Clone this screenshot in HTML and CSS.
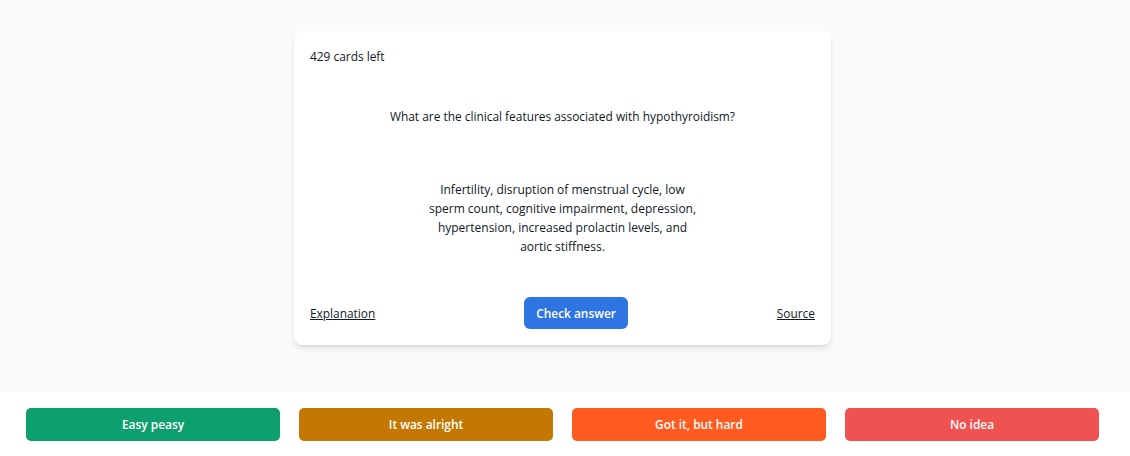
FILE: index.html
```html
<!DOCTYPE html>
<html>
<head>
<meta charset="utf-8">
<link rel="stylesheet" href="styles.css">
</head>
<body>
<main class="stage">
  <section class="card">
    <div class="count">429 cards left</div>
    <div class="question">What are the clinical features associated with hypothyroidism?</div>
    <div class="answer">Infertility, disruption of menstrual cycle, low sperm count, cognitive impairment, depression, hypertension, increased prolactin levels, and aortic stiffness.</div>
    <div class="card-footer">
      <a class="link" href="#">Explanation</a>
      <button class="check">Check answer</button>
      <a class="link" href="#">Source</a>
    </div>
  </section>
</main>
<footer class="grades">
  <button class="grade easy">Easy peasy</button>
  <button class="grade ok">It was alright</button>
  <button class="grade hard">Got it, but hard</button>
  <button class="grade none">No idea</button>
</footer>
</body>
</html>
```
FILE: styles.css
```css
html, body {
  margin: 0;
  padding: 0;
  height: 100%;
}
body {
  background: #f9fafb;
  font-family: "Open Sans", "Noto Sans", sans-serif;
  color: #111827;
  display: flex;
  flex-direction: column;
}
.stage {
  flex: 1;
  display: flex;
  justify-content: center;
  padding-top: 31px;
  padding-right: 5px;
}
.card {
  width: 537px;
  height: 314px;
  box-sizing: border-box;
  background: #fff;
  border-radius: 8px;
  box-shadow: 0 4px 6px -1px rgba(0,0,0,0.1), 0 2px 4px -2px rgba(0,0,0,0.1);
  padding: 16px;
  display: flex;
  flex-direction: column;
}
.count {
  font-size: 11.9px;
  line-height: 18px;
}
.question {
  margin-top: 42px;
  text-align: center;
  font-size: 11.9px;
  line-height: 18px;
}
.answer {
  margin: 55px auto 0;
  width: 272px;
  text-align: center;
  font-size: 12px;
  line-height: 19px;
}
.card-footer {
  margin-top: auto;
  display: flex;
  align-items: center;
  justify-content: space-between;
}
.link {
  color: #111827;
  font-size: 11.9px;
  text-decoration: underline;
}
.check {
  width: 104px;
  height: 32px;
  border: 0;
  border-radius: 6px;
  background: #2f74e3;
  color: #fff;
  font-family: inherit;
  font-weight: 600;
  font-size: 11.9px;
}
.grades {
  height: 64px;
  background: #fff;
  display: grid;
  grid-template-columns: repeat(4, 254px);
  column-gap: 19px;
  align-items: center;
  padding: 0 31px 0 26px;
}
.grade {
  height: 33px;
  border: 0;
  border-radius: 5px;
  color: #fff;
  font-family: inherit;
  font-weight: 600;
  font-size: 11.9px;
}
.easy { background: #0e9f6e; }
.ok { background: #c27803; }
.hard { background: #ff5a1f; }
.none { background: #f05252; }
```
